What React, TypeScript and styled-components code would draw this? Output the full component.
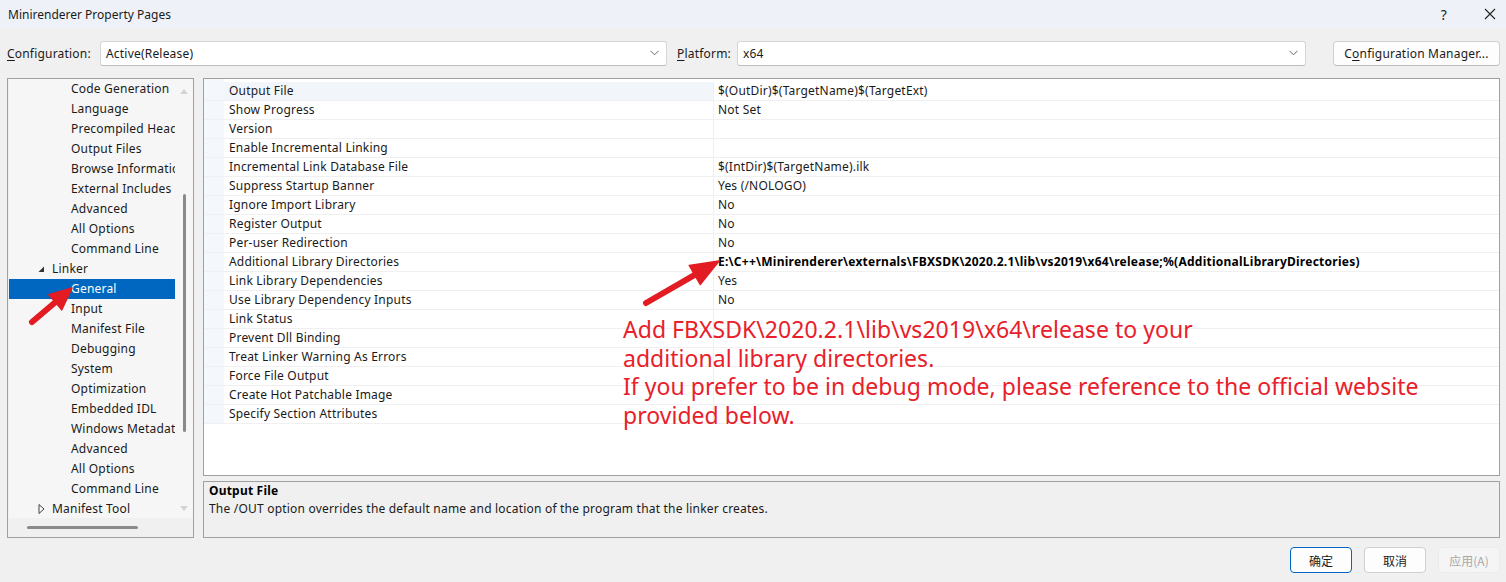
import React from 'react';
import styled, { createGlobalStyle } from 'styled-components';

const GlobalStyle = createGlobalStyle`
  body {
    margin: 0;
    background: #f0f0f0;
    font-family: "Noto Sans", "Noto Sans CJK SC", sans-serif;
    font-size: 12px;
    letter-spacing: 0.2px;
    color: #1a1a1a;
  }
`;

const Window = styled.div`
  position: relative;
  width: 1506px;
  height: 582px;
  display: flex;
  flex-direction: column;
  overflow: hidden;
  background: #f0f0f0;
`;

const TitleBar = styled.div`
  height: 28px;
  display: flex;
  align-items: center;
  justify-content: space-between;
  padding-left: 8px;
  background: #eef2f8;
`;

const TitleText = styled.span`
  font-size: 12px;
  color: #1a1a1a;
  letter-spacing: 0;
`;

const TitleButtons = styled.div`
  display: flex;
  align-items: center;
  height: 100%;
`;

const TitleButton = styled.div<{ $width: number }>`
  width: ${(p) => p.$width}px;
  height: 100%;
  display: flex;
  align-items: center;
  justify-content: center;
  font-size: 14px;
  color: #222;
`;

const ConfigRow = styled.div`
  height: 50px;
  display: flex;
  align-items: center;
  padding-left: 7px;
`;

const FieldLabel = styled.label<{ $width: number; $gap?: number }>`
  width: ${(p) => p.$width}px;
  margin-left: ${(p) => p.$gap ?? 0}px;
  font-size: 12px;
  u {
    text-decoration: underline;
    text-underline-offset: 2px;
  }
`;

const Combo = styled.div<{ $width: number }>`
  width: ${(p) => p.$width}px;
  height: 25px;
  box-sizing: border-box;
  display: flex;
  align-items: center;
  justify-content: space-between;
  padding: 0 7px 0 5px;
  background: #fff;
  border: 1px solid #d6d6d6;
  border-bottom-color: #bdbdbd;
  border-radius: 3px;
`;

const ManagerButton = styled.div`
  margin-left: 27px;
  width: 167px;
  height: 25px;
  box-sizing: border-box;
  display: flex;
  align-items: center;
  justify-content: center;
  background: #fdfdfd;
  border: 1px solid #d0d0d0;
  border-bottom-color: #bcbcbc;
  border-radius: 4px;
  u {
    text-underline-offset: 2px;
  }
`;

const Main = styled.div`
  height: 460px;
  display: flex;
  gap: 9px;
  padding: 0 6px 0 7px;
`;

const TreeBox = styled.div`
  width: 187px;
  box-sizing: border-box;
  border: 1px solid #a0a0a0;
  padding: 0 0 0 1px;
  display: flex;
  flex-direction: column;
  background: #f0f0f0;
`;

const TreeBody = styled.div`
  flex: 1;
  display: flex;
  min-height: 0;
`;

const TreeList = styled.div`
  width: 166px;
  overflow: hidden;
  background: #f6f6f6;
`;

const TreeItem = styled.div<{ $level: number; $selected?: boolean }>`
  position: relative;
  height: 20px;
  line-height: 20px;
  padding-left: ${(p) => (p.$level === 1 ? 43 : 62)}px;
  white-space: nowrap;
  overflow: hidden;
  background: ${(p) => (p.$selected ? '#0067c0' : 'transparent')};
  color: ${(p) => (p.$selected ? '#fff' : '#1a1a1a')};
`;

const Expander = styled.span`
  position: absolute;
  left: 29px;
  top: 0;
  height: 20px;
  display: flex;
  align-items: center;
`;

const VScroll = styled.div`
  width: 18px;
  display: flex;
  flex-direction: column;
  align-items: center;
  padding: 6px 0 4px;
  box-sizing: border-box;
  background: #f6f6f6;
`;

const ScrollArrow = styled.div`
  height: 12px;
  display: flex;
  align-items: center;
  justify-content: center;
`;

const VTrack = styled.div`
  flex: 1;
  width: 100%;
  display: flex;
  flex-direction: column;
  align-items: center;
  padding-top: 97px;
  padding-bottom: 70px;
`;

const VThumb = styled.div`
  width: 3px;
  flex: 1;
  border-radius: 2px;
  background: #8a8a8a;
`;

const HScroll = styled.div`
  height: 19px;
  display: flex;
  align-items: center;
  padding-left: 18px;
`;

const HThumb = styled.div`
  width: 111px;
  height: 3px;
  border-radius: 2px;
  background: #8a8a8a;
`;

const RightColumn = styled.div`
  flex: 1;
  display: flex;
  flex-direction: column;
  gap: 5px;
`;

const GridBox = styled.div`
  flex: 1;
  border: 1px solid #a0a0a0;
  background: #fff;
`;

const GridRows = styled.div`
  padding-top: 3px;
  background: linear-gradient(to right, #f4f7fc 20px, #fff 20px);
`;

const Row = styled.div<{ $selected?: boolean }>`
  display: grid;
  grid-template-columns: 20px 490px 1fr;
  height: 19px;
  line-height: 18px;
  box-sizing: border-box;
  border-bottom: 1px solid #f0f0f0;
  & > div:nth-child(2) {
    background: ${(p) => (p.$selected ? '#f2f5fa' : '#fff')};
  }
`;

const MarginCell = styled.div`
  background: #f4f7fc;
`;

const NameCell = styled.div`
  padding-left: 5px;
  border-right: 1px solid #f0f0f0;
  white-space: nowrap;
  overflow: hidden;
`;

const ValueCell = styled.div<{ $bold?: boolean }>`
  padding-left: 4px;
  white-space: nowrap;
  overflow: hidden;
  font-weight: ${(p) => (p.$bold ? 700 : 400)};
  letter-spacing: ${(p) => (p.$bold ? '0.25px' : '0.2px')};
  color: ${(p) => (p.$bold ? '#000' : '#1a1a1a')};
`;

const DescBox = styled.div`
  height: 57px;
  box-sizing: border-box;
  border: 1px solid #a0a0a0;
  padding: 0 5px;
  line-height: 18px;
  background: #f0f0f0;
`;

const DescTitle = styled.div`
  font-weight: 700;
  color: #000;
`;

const Footer = styled.div`
  flex: 1;
  display: flex;
  align-items: center;
  justify-content: flex-end;
  gap: 12px;
  padding-right: 6px;
`;

const DialogButton = styled.div<{ $variant?: 'default' | 'disabled' }>`
  width: 62px;
  height: 26px;
  box-sizing: border-box;
  display: flex;
  align-items: center;
  justify-content: center;
  border-radius: 4px;
  font-family: "Noto Sans CJK SC", sans-serif;
  font-size: 12px;
  letter-spacing: 0;
  background: ${(p) => (p.$variant === 'disabled' ? '#f5f5f5' : '#fdfdfd')};
  color: ${(p) => (p.$variant === 'disabled' ? '#a8a8a8' : '#1a1a1a')};
  border: 1px solid
    ${(p) =>
      p.$variant === 'default' ? '#0067c0' : p.$variant === 'disabled' ? '#ececec' : '#d0d0d0'};
`;

const Annotation = styled.div`
  position: absolute;
  left: 623px;
  top: 315px;
  font-family: "Noto Sans", sans-serif;
  font-size: 23px;
  letter-spacing: 0.03px;
  line-height: 28.7px;
  color: #e8202a;
  white-space: nowrap;
`;

const Overlay = styled.svg`
  position: absolute;
  left: 0;
  top: 0;
  pointer-events: none;
`;

const Chevron = () => (
  <svg width="9" height="6" viewBox="0 0 9 6">
    <path d="M0.5 0.8 L4.5 4.8 L8.5 0.8" fill="none" stroke="#666" strokeWidth="1" />
  </svg>
);

const RedArrow = ({ from, to, head, half, width }: { from: [number, number]; to: [number, number]; head: number; half: number; width: number }) => {
  const dx = to[0] - from[0];
  const dy = to[1] - from[1];
  const len = Math.hypot(dx, dy);
  const ux = dx / len;
  const uy = dy / len;
  const bx = to[0] - ux * head;
  const by = to[1] - uy * head;
  const px = -uy * half;
  const py = ux * half;
  return (
    <g fill="#e31c23" stroke="#e31c23">
      <line x1={from[0]} y1={from[1]} x2={bx + ux * 2} y2={by + uy * 2} strokeWidth={width} strokeLinecap="round" />
      <polygon points={`${to[0]},${to[1]} ${bx + px},${by + py} ${bx - px},${by - py}`} strokeWidth="1.5" strokeLinejoin="round" />
    </g>
  );
};

type TreeEntry = { label: string; level: 1 | 2; expander?: 'open' | 'closed'; selected?: boolean };

const treeItems: TreeEntry[] = [
  { label: 'Code Generation', level: 2 },
  { label: 'Language', level: 2 },
  { label: 'Precompiled Headers', level: 2 },
  { label: 'Output Files', level: 2 },
  { label: 'Browse Information', level: 2 },
  { label: 'External Includes', level: 2 },
  { label: 'Advanced', level: 2 },
  { label: 'All Options', level: 2 },
  { label: 'Command Line', level: 2 },
  { label: 'Linker', level: 1, expander: 'open' },
  { label: 'General', level: 2, selected: true },
  { label: 'Input', level: 2 },
  { label: 'Manifest File', level: 2 },
  { label: 'Debugging', level: 2 },
  { label: 'System', level: 2 },
  { label: 'Optimization', level: 2 },
  { label: 'Embedded IDL', level: 2 },
  { label: 'Windows Metadata', level: 2 },
  { label: 'Advanced', level: 2 },
  { label: 'All Options', level: 2 },
  { label: 'Command Line', level: 2 },
  { label: 'Manifest Tool', level: 1, expander: 'closed' },
];

const properties: { name: string; value?: string; bold?: boolean }[] = [
  { name: 'Output File', value: '$(OutDir)$(TargetName)$(TargetExt)' },
  { name: 'Show Progress', value: 'Not Set' },
  { name: 'Version' },
  { name: 'Enable Incremental Linking' },
  { name: 'Incremental Link Database File', value: '$(IntDir)$(TargetName).ilk' },
  { name: 'Suppress Startup Banner', value: 'Yes (/NOLOGO)' },
  { name: 'Ignore Import Library', value: 'No' },
  { name: 'Register Output', value: 'No' },
  { name: 'Per-user Redirection', value: 'No' },
  {
    name: 'Additional Library Directories',
    value: 'E:\\C++\\Minirenderer\\externals\\FBXSDK\\2020.2.1\\lib\\vs2019\\x64\\release;%(AdditionalLibraryDirectories)',
    bold: true,
  },
  { name: 'Link Library Dependencies', value: 'Yes' },
  { name: 'Use Library Dependency Inputs', value: 'No' },
  { name: 'Link Status' },
  { name: 'Prevent Dll Binding' },
  { name: 'Treat Linker Warning As Errors' },
  { name: 'Force File Output' },
  { name: 'Create Hot Patchable Image' },
  { name: 'Specify Section Attributes' },
];

const App = () => {
  return (
    <Window>
      <GlobalStyle />
      <TitleBar>
        <TitleText>Minirenderer Property Pages</TitleText>
        <TitleButtons>
          <TitleButton $width={60}>?</TitleButton>
          <TitleButton $width={32}>
            <svg width="12" height="12" viewBox="0 0 12 12">
              <path d="M1 1 L11 11 M11 1 L1 11" stroke="#222" strokeWidth="1.1" />
            </svg>
          </TitleButton>
        </TitleButtons>
      </TitleBar>

      <ConfigRow>
        <FieldLabel $width={93}>
          <u>C</u>onfiguration:
        </FieldLabel>
        <Combo $width={567}>
          <span>Active(Release)</span>
          <Chevron />
        </Combo>
        <FieldLabel $width={60} $gap={10}>
          <u>P</u>latform:
        </FieldLabel>
        <Combo $width={569}>
          <span>x64</span>
          <Chevron />
        </Combo>
        <ManagerButton>
          C<u>o</u>nfiguration Manager...
        </ManagerButton>
      </ConfigRow>

      <Main>
        <TreeBox>
          <TreeBody>
            <TreeList>
              {treeItems.map((item, i) => (
                <TreeItem key={i} $level={item.level} $selected={item.selected}>
                  {item.expander && (
                    <Expander>
                      {item.expander === 'open' ? (
                        <svg width="7" height="7" viewBox="0 0 7 7">
                          <polygon points="6,0.5 6,6 0.5,6" fill="#333" />
                        </svg>
                      ) : (
                        <svg width="7" height="10" viewBox="0 0 7 10">
                          <polygon points="1,0.5 6,5 1,9.5" fill="none" stroke="#444" strokeWidth="1" />
                        </svg>
                      )}
                    </Expander>
                  )}
                  {item.label}
                </TreeItem>
              ))}
            </TreeList>
            <VScroll>
              <ScrollArrow>
                <svg width="8" height="5" viewBox="0 0 8 5">
                  <polygon points="0,5 4,0 8,5" fill="#d4d4d4" />
                </svg>
              </ScrollArrow>
              <VTrack>
                <VThumb />
              </VTrack>
              <ScrollArrow>
                <svg width="8" height="5" viewBox="0 0 8 5">
                  <polygon points="0,0 4,5 8,0" fill="#d4d4d4" />
                </svg>
              </ScrollArrow>
            </VScroll>
          </TreeBody>
          <HScroll>
            <HThumb />
          </HScroll>
        </TreeBox>

        <RightColumn>
          <GridBox>
            <GridRows>
              {properties.map((prop, i) => (
                <Row key={prop.name} $selected={i === 0}>
                  <MarginCell />
                  <NameCell>{prop.name}</NameCell>
                  <ValueCell $bold={prop.bold}>{prop.value}</ValueCell>
                </Row>
              ))}
            </GridRows>
          </GridBox>
          <DescBox>
            <DescTitle>Output File</DescTitle>
            <div>The /OUT option overrides the default name and location of the program that the linker creates.</div>
          </DescBox>
        </RightColumn>
      </Main>

      <Footer>
        <DialogButton $variant="default">确定</DialogButton>
        <DialogButton>取消</DialogButton>
        <DialogButton $variant="disabled">应用(A)</DialogButton>
      </Footer>

      <Annotation>
        Add FBXSDK\2020.2.1\lib\vs2019\x64\release to your
        <br />
        additional library directories.
        <br />
        If you prefer to be in debug mode, please reference to the official website
        <br />
        provided below.
      </Annotation>

      <Overlay width="1506" height="582">
        <RedArrow from={[646, 303]} to={[719, 261]} head={28} half={11} width={6} />
        <RedArrow from={[32, 322]} to={[72, 288]} head={22} half={10} width={6} />
      </Overlay>
    </Window>
  );
};

export default App;
